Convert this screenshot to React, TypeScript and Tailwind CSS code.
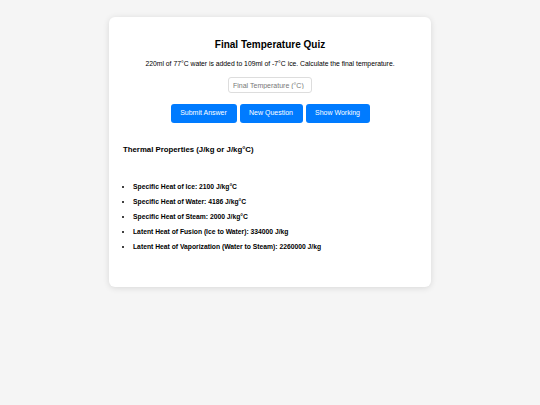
export default function App() {
  const props = [
    'Specific Heat of Ice: 2100 J/kg°C',
    'Specific Heat of Water: 4186 J/kg°C',
    'Specific Heat of Steam: 2000 J/kg°C',
    'Latent Heat of Fusion (Ice to Water): 334000 J/kg',
    'Latent Heat of Vaporization (Water to Steam): 2260000 J/kg',
  ]

  return (
    <div className="min-h-[405px] bg-[#f5f5f5] pt-[17px] font-['Liberation_Sans',Arial,sans-serif] text-black">
      <div className="mx-auto w-[322px] rounded-[6px] bg-white px-[14px] pt-[21px] pb-[29px] shadow-[0_1px_6px_rgba(0,0,0,0.12)]">
        <h1 className="text-center text-[10px] font-bold leading-[13px]">Final Temperature Quiz</h1>
        <p className="mt-[8px] text-center text-[6.8px] leading-[9px]">
          220ml of 77°C water is added to 109ml of -7°C ice. Calculate the final temperature.
        </p>
        <div className="mt-[9px] flex justify-center">
          <input
            className="h-[16px] w-[84px] rounded-[3px] border border-[#ddd] px-[4px] text-[7px] outline-none placeholder:text-[#777]"
            placeholder="Final Temperature (°C)"
          />
        </div>
        <div className="mt-[11px] flex justify-center gap-[3px]">
          <button className="h-[19px] w-[66px] rounded-[3px] bg-[#007bff] text-[7px] text-white">Submit Answer</button>
          <button className="h-[19px] w-[63px] rounded-[3px] bg-[#007bff] text-[7px] text-white">New Question</button>
          <button className="h-[19px] w-[64px] rounded-[3px] bg-[#007bff] text-[7px] text-white">Show Working</button>
        </div>
        <h2 className="mt-[22px] text-[7.8px] font-bold leading-[10px]">Thermal Properties (J/kg or J/kg°C)</h2>
        <ul className="mt-[28px] list-disc pl-[10px] text-[6.75px] font-bold leading-[8px]">
          {props.map((p) => (
            <li key={p} className="mb-[7px]">{p}</li>
          ))}
        </ul>
      </div>
    </div>
  )
}
